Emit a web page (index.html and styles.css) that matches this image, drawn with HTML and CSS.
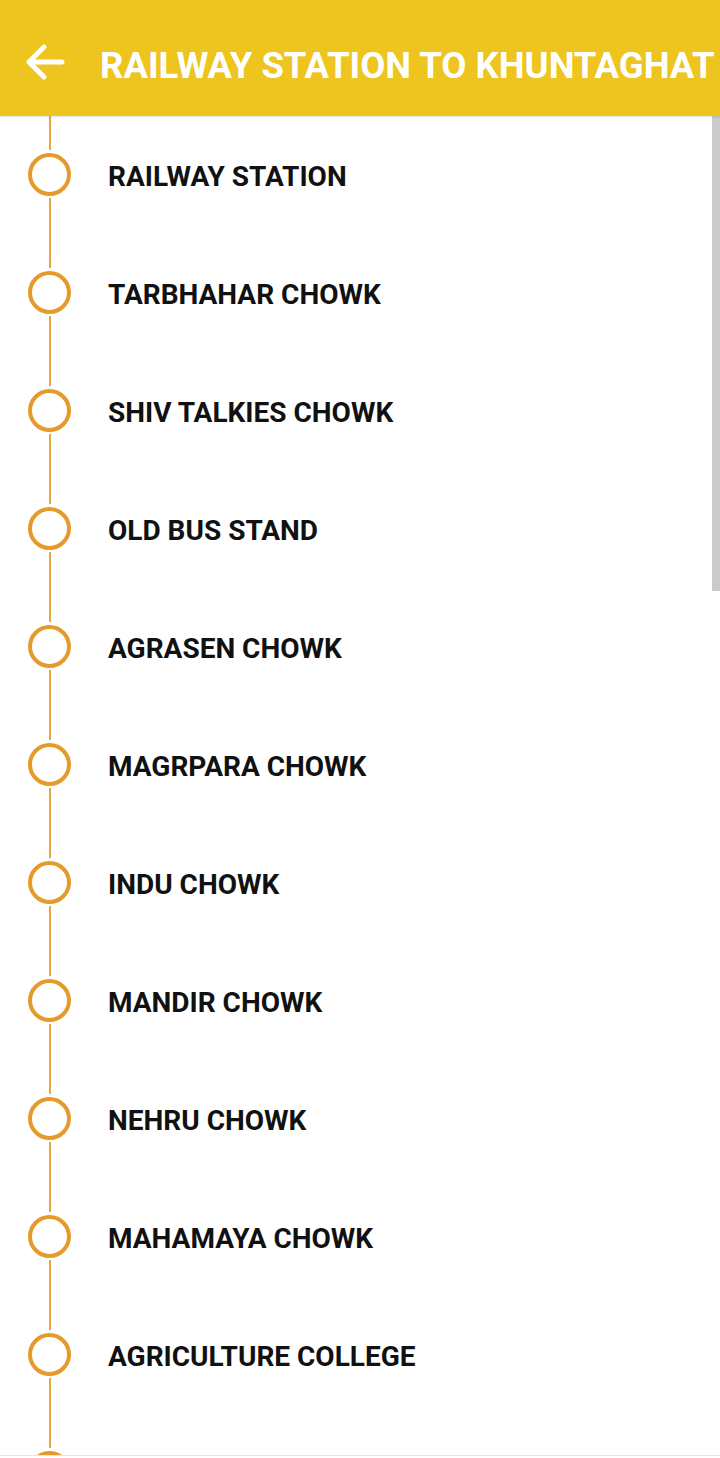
FILE: index.html
```html
<!DOCTYPE html>
<html>
<head>
<meta charset="utf-8">
<link rel="stylesheet" href="styles.css">
</head>
<body>
<div class="app">
  <header class="bar">
    <svg class="back" width="40" height="40" viewBox="0 0 40 40">
      <path d="M4 20 H37 M19 5 L4 20 L19 35" fill="none" stroke="#fff" stroke-width="5" stroke-linecap="round" stroke-linejoin="round"/>
    </svg>
    <h1 class="title">RAILWAY STATION TO KHUNTAGHAT</h1>
  </header>
  <main class="list">
    <div class="row"><div class="track"><span class="seg top"></span><span class="dot"></span><span class="seg bottom"></span></div><div class="name">RAILWAY STATION</div></div>
    <div class="row"><div class="track"><span class="seg top"></span><span class="dot"></span><span class="seg bottom"></span></div><div class="name">TARBHAHAR CHOWK</div></div>
    <div class="row"><div class="track"><span class="seg top"></span><span class="dot"></span><span class="seg bottom"></span></div><div class="name">SHIV TALKIES CHOWK</div></div>
    <div class="row"><div class="track"><span class="seg top"></span><span class="dot"></span><span class="seg bottom"></span></div><div class="name">OLD BUS STAND</div></div>
    <div class="row"><div class="track"><span class="seg top"></span><span class="dot"></span><span class="seg bottom"></span></div><div class="name">AGRASEN CHOWK</div></div>
    <div class="row"><div class="track"><span class="seg top"></span><span class="dot"></span><span class="seg bottom"></span></div><div class="name">MAGRPARA CHOWK</div></div>
    <div class="row"><div class="track"><span class="seg top"></span><span class="dot"></span><span class="seg bottom"></span></div><div class="name">INDU CHOWK</div></div>
    <div class="row"><div class="track"><span class="seg top"></span><span class="dot"></span><span class="seg bottom"></span></div><div class="name">MANDIR CHOWK</div></div>
    <div class="row"><div class="track"><span class="seg top"></span><span class="dot"></span><span class="seg bottom"></span></div><div class="name">NEHRU CHOWK</div></div>
    <div class="row"><div class="track"><span class="seg top"></span><span class="dot"></span><span class="seg bottom"></span></div><div class="name">MAHAMAYA CHOWK</div></div>
    <div class="row"><div class="track"><span class="seg top"></span><span class="dot"></span><span class="seg bottom"></span></div><div class="name">AGRICULTURE COLLEGE</div></div>
    <div class="row"><div class="track"><span class="seg top"></span><span class="dot"></span><span class="seg bottom"></span></div></div>
    <div class="scrollbar"></div>
  </main>
</div>
</body>
</html>
```
FILE: styles.css
```css
* { box-sizing: border-box; }
html, body { margin: 0; padding: 0; background: #fff; }
body { width: 720px; height: 1458px; overflow: hidden; font-family: Roboto, "Liberation Sans", Arial, sans-serif; }
.app { display: flex; flex-direction: column; height: 1458px; }
.bar {
  height: 116px;
  flex: 0 0 116px;
  background: #eec41e;
  display: flex;
  align-items: center;
  padding-left: 25px;
  padding-top: 8px;
  gap: 35px;
  box-shadow: 0 1px 2px rgba(0,0,0,0.12);
  position: relative;
  z-index: 2;
}
.back { flex: 0 0 40px; }
.title {
  margin: 0;
  padding-top: 7px;
  color: #fff;
  font-size: 36.5px;
  font-weight: 700;
  white-space: nowrap;
  letter-spacing: 0;
}
.list {
  position: relative;
  height: 1340px;
  flex: 0 0 1340px;
  overflow: hidden;
  border-bottom: 1px solid #e4e4e4;
}
.row {
  height: 118px;
  display: flex;
  align-items: center;
}
.track {
  width: 98px;
  height: 118px;
  display: flex;
  flex-direction: column;
  align-items: center;
  padding-left: 1px;
}
.seg { width: 2px; background: #e7a63c; display: block; }
.seg.top { height: 34px; margin-bottom: 3px; }
.seg.bottom { height: 37px; margin-top: 2px; }
.dot {
  width: 43px;
  height: 43px;
  border-radius: 50%;
  border: 4px solid #e59b2c;
  display: block;
  flex: 0 0 43px;
}
.name {
  padding-left: 10px;
  padding-top: 3px;
  font-size: 28px;
  font-weight: 700;
  color: #111;
  white-space: nowrap;
}
.scrollbar {
  position: absolute;
  right: 0;
  top: 0;
  width: 8px;
  height: 475px;
  background: #cbcbcb;
}
```
